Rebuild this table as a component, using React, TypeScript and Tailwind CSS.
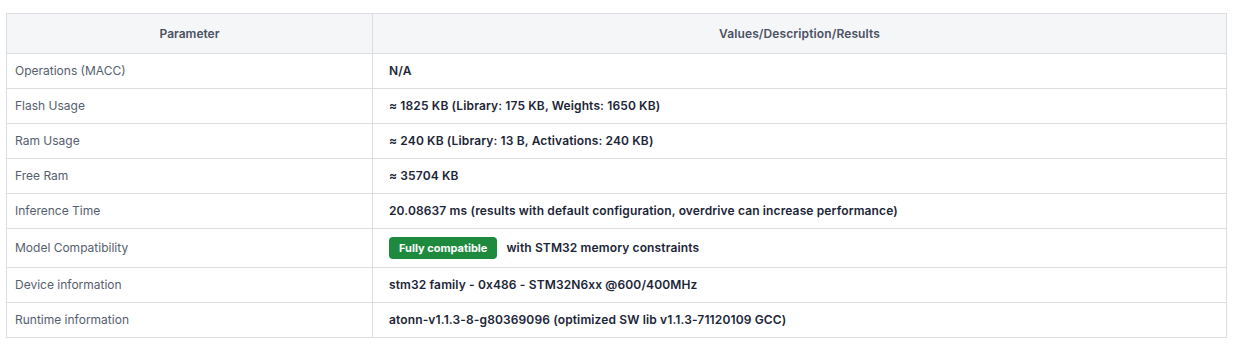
import React from 'react'

interface Row {
  param: string
  value: React.ReactNode
}

const rows: Row[] = [
  { param: 'Operations (MACC)', value: 'N/A' },
  { param: 'Flash Usage', value: '≈ 1825 KB (Library: 175 KB, Weights: 1650 KB)' },
  { param: 'Ram Usage', value: '≈ 240 KB (Library: 13 B, Activations: 240 KB)' },
  { param: 'Free Ram', value: '≈ 35704 KB' },
  {
    param: 'Inference Time',
    value: '20.08637 ms (results with default configuration, overdrive can increase performance)',
  },
  {
    param: 'Model Compatibility',
    value: (
      <div className="flex items-center gap-[9px]">
        <span className="inline-flex h-[22px] items-center rounded-[4px] bg-[#1e8a3e] px-[10px] text-[11px] font-bold tracking-normal text-white">
          Fully compatible
        </span>
        <span>with STM32 memory constraints</span>
      </div>
    ),
  },
  { param: 'Device information', value: 'stm32 family - 0x486 - STM32N6xx @600/400MHz' },
  {
    param: 'Runtime information',
    value: 'atonn-v1.1.3-8-g80369096 (optimized SW lib v1.1.3-71120109 GCC)',
  },
]

export default function App() {
  return (
    <div className="min-h-[352px] bg-white px-[6px] pt-[13px] font-['Inter',sans-serif] text-[12px]">
      <table className="w-full border-collapse border border-[#dcdde1]">
        <thead>
          <tr className="bg-[#f5f6f8]">
            <th className="h-[40px] w-[366px] border border-[#dcdde1] text-center font-semibold text-[#4a5162]">
              Parameter
            </th>
            <th className="h-[40px] border border-[#dcdde1] text-center font-semibold tracking-[0.12px] text-[#4a5162]">
              Values/Description/Results
            </th>
          </tr>
        </thead>
        <tbody>
          {rows.map((row) => (
            <tr key={row.param}>
              <td
                className={`border border-[#dcdde1] px-[8px] text-[#555e6e] ${
                  row.param === 'Model Compatibility' ? 'h-[39px]' : 'h-[35px]'
                }`}
              >
                {row.param}
              </td>
              <td className="border border-[#dcdde1] px-[16px] font-semibold tracking-[0.13px] text-[#1b2537]">
                {row.value}
              </td>
            </tr>
          ))}
        </tbody>
      </table>
    </div>
  )
}
